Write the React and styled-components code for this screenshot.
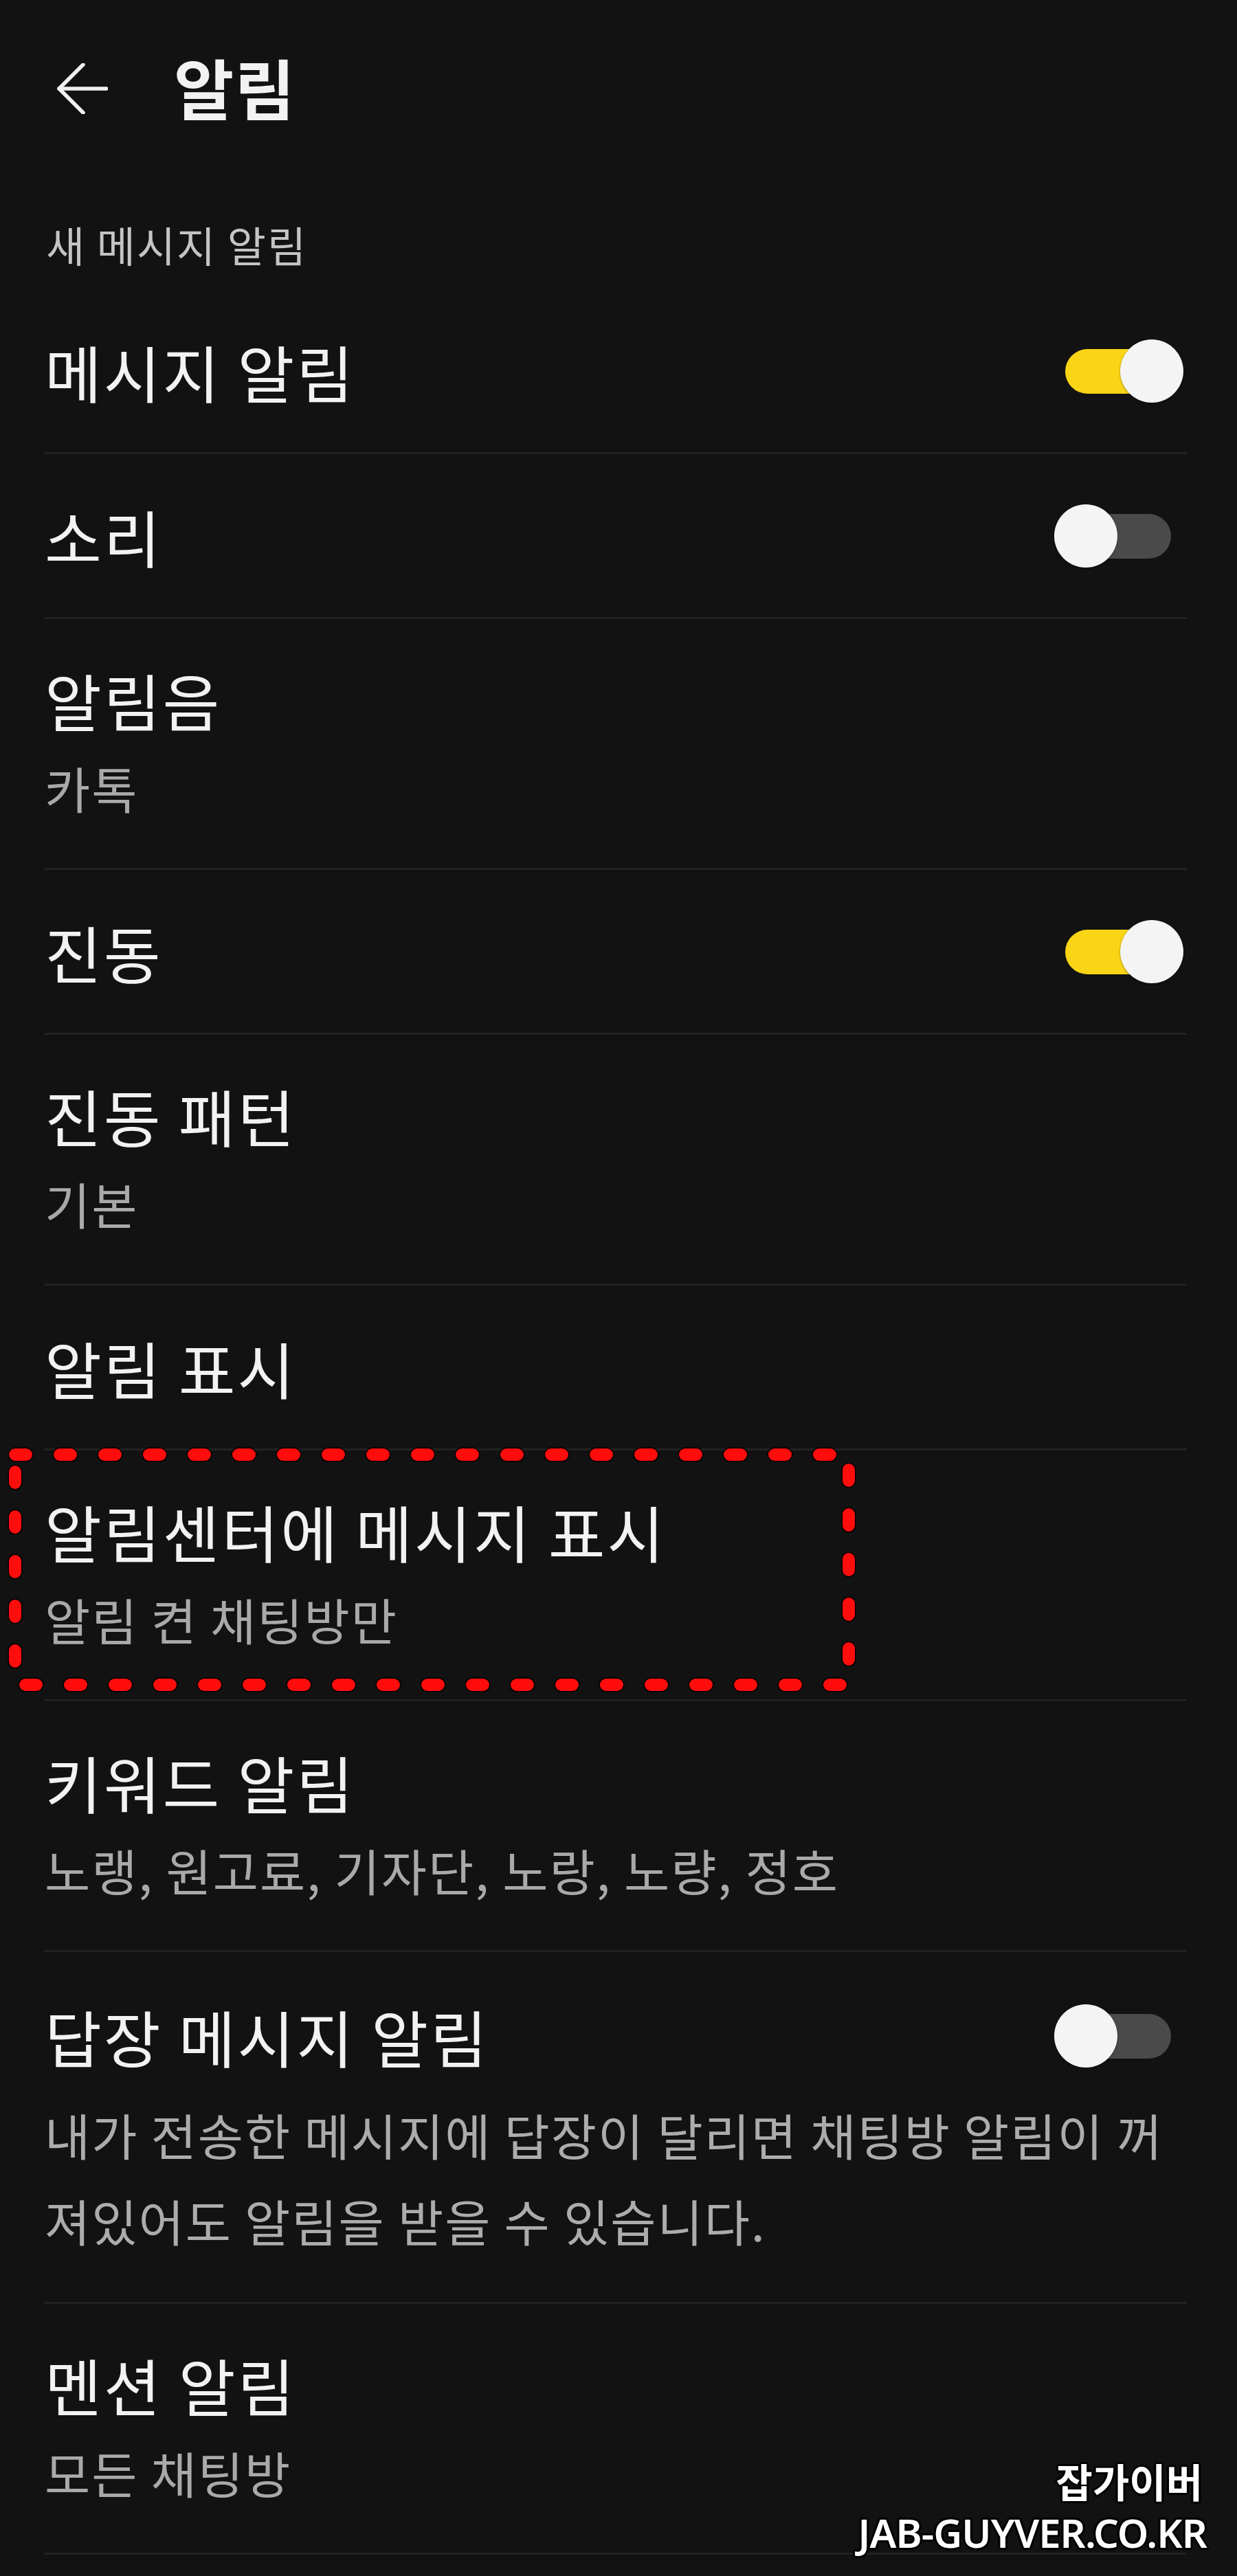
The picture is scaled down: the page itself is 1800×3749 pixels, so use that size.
import styled, { createGlobalStyle } from 'styled-components'

const GlobalStyle = createGlobalStyle`
    html, body {
        margin: 0;
        padding: 0;
        background: #121212;
    }
    body {
        font-family: "Noto Sans CJK KR", "Noto Sans", sans-serif;
        -webkit-font-smoothing: antialiased;
    }
`

const Page = styled.div`
    position: relative;
    width: 1800px;
    min-height: 3749px;
    background: #121212;
    box-sizing: border-box;
`

const Header = styled.header`
    display: flex;
    align-items: center;
    gap: 96px;
    height: 250px;
    padding-left: 83px;
    box-sizing: border-box;
`

const BackButton = styled.button`
    display: flex;
    align-items: center;
    justify-content: center;
    width: 74px;
    height: 74px;
    padding: 0;
    margin-top: 8px;
    border: none;
    background: transparent;
    color: #f0f0f0;
`

const PageTitle = styled.h1`
    margin: 0;
    font-size: 95px;
    font-weight: 700;
    line-height: 1;
    letter-spacing: 1px;
    color: #f2f2f2;
`

const SectionLabel = styled.div`
    height: 171px;
    padding: 66px 0 0 67px;
    box-sizing: border-box;
    font-size: 61px;
    line-height: 80px;
    letter-spacing: 2px;
    color: #c4c4c4;
`

const List = styled.div`
    display: flex;
    flex-direction: column;
`

const Row = styled.div`
    position: relative;
    display: flex;
    flex-direction: column;
    justify-content: center;
    height: ${({ $h }) => $h}px;
    margin: 0 73px 0 65px;
    border-bottom: 3px solid #222222;
    box-sizing: border-box;
`

const TitleLine = styled.div`
    display: flex;
    align-items: center;
    justify-content: space-between;
    height: 128px;
`

const Title = styled.div`
    font-size: 90px;
    line-height: 128px;
    letter-spacing: 3px;
    color: #f2f2f2;
    white-space: nowrap;
`

const Subtitle = styled.div`
    font-size: 72px;
    line-height: 128px;
    letter-spacing: 2px;
    color: #a9a9a9;
    white-space: nowrap;
`

const Description = styled.div`
    margin-top: 16px;
    font-size: 72px;
    line-height: 125px;
    letter-spacing: 2px;
    color: #acacac;
    white-space: nowrap;
`

const Toggle = styled.div`
    position: relative;
    flex-shrink: 0;
    width: 188px;
    height: 92px;
    margin-right: 5px;
`

const Track = styled.div`
    position: absolute;
    left: 16px;
    top: 14px;
    width: 154px;
    height: 65px;
    border-radius: 33px;
    background: ${({ $on }) => ($on ? '#fad516' : '#4a4a4a')};
`

const Knob = styled.div`
    position: absolute;
    top: 0;
    left: ${({ $on }) => ($on ? '96px' : '0')};
    width: 92px;
    height: 92px;
    border-radius: 50%;
    background: #f4f4f4;
    box-shadow: 0 1px 3px rgb(0 0 0 / 40%);
`

const Highlight = styled.svg`
    position: absolute;
    left: -52px;
    top: -3px;
    width: 1231px;
    height: 353px;
    pointer-events: none;
    overflow: visible;
`

const Watermark = styled.div`
    position: absolute;
    right: 44px;
    bottom: 25px;
    display: flex;
    flex-direction: column;
    align-items: flex-end;
    color: #ffffff;
    text-shadow:
        0 0 4px #000, 3px 0 0 #000, -3px 0 0 #000, 0 3px 0 #000, 0 -3px 0 #000,
        2px 2px 0 #000, -2px -2px 0 #000, 2px -2px 0 #000, -2px 2px 0 #000;
`

const WatermarkKo = styled.div`
    font-family: "Noto Sans CJK KR", sans-serif;
    font-size: 58px;
    font-weight: 700;
    line-height: 76px;
    margin-right: 6px;
`

const WatermarkEn = styled.div`
    font-family: "Noto Sans", "Open Sans", sans-serif;
    font-size: 58px;
    font-weight: 600;
    line-height: 76px;
    letter-spacing: -1px;
`

function Switch({ on }) {
    return (
        <Toggle>
            <Track $on={on} />
            <Knob $on={on} />
        </Toggle>
    )
}

function ArrowLeft() {
    return (
        <svg width="74" height="74" viewBox="0 0 74 74" fill="none" stroke="currentColor" strokeWidth="5.5" strokeLinecap="round" strokeLinejoin="round">
            <path d="M72 37H3" />
            <path d="M38 2L3 37l35 35" />
        </svg>
    )
}

const rows = [
    { title: '메시지 알림', toggle: true },
    { title: '소리', toggle: false },
    { title: '알림음', sub: '카톡' },
    { title: '진동', toggle: true },
    { title: '진동 패턴', sub: '기본' },
    { title: '알림 표시' },
    { title: '알림센터에 메시지 표시', sub: '알림 켠 채팅방만', marked: true },
    { title: '키워드 알림', sub: '노랭, 원고료, 기자단, 노랑, 노량, 정호' },
    {
        title: '답장 메시지 알림',
        toggle: false,
        desc: ['내가 전송한 메시지에 답장이 달리면 채팅방 알림이 꺼', '져있어도 알림을 받을 수 있습니다.'],
    },
    { title: '멘션 알림', sub: '모든 채팅방' },
]

function rowHeight(row) {
    if (row.desc) return 512
    if (row.sub) return 365
    return 240
}

export default function App() {
    return (
        <>
            <GlobalStyle />
            <Page>
                <Header>
                    <BackButton aria-label="뒤로">
                        <ArrowLeft />
                    </BackButton>
                    <PageTitle>알림</PageTitle>
                </Header>
                <SectionLabel>새 메시지 알림</SectionLabel>
                <List>
                    {rows.map((row) => (
                        <Row key={row.title} $h={rowHeight(row)}>
                            <TitleLine>
                                <Title>{row.title}</Title>
                                {row.toggle !== undefined && <Switch on={row.toggle} />}
                            </TitleLine>
                            {row.sub && <Subtitle>{row.sub}</Subtitle>}
                            {row.desc && (
                                <Description>
                                    {row.desc[0]}
                                    <br />
                                    {row.desc[1]}
                                </Description>
                            )}
                            {row.marked && (
                                <Highlight viewBox="0 0 1231 353">
                                    <rect x="9" y="9" width="1213" height="335" fill="none" stroke="#000" strokeWidth="21" strokeDasharray="16 49" strokeLinecap="round" />
                                    <rect x="9" y="9" width="1213" height="335" fill="none" stroke="#ff0d0d" strokeWidth="18" strokeDasharray="16 49" strokeLinecap="round" />
                                </Highlight>
                            )}
                        </Row>
                    ))}
                </List>
                <Watermark>
                    <WatermarkKo>잡가이버</WatermarkKo>
                    <WatermarkEn>JAB-GUYVER.CO.KR</WatermarkEn>
                </Watermark>
            </Page>
        </>
    )
}
